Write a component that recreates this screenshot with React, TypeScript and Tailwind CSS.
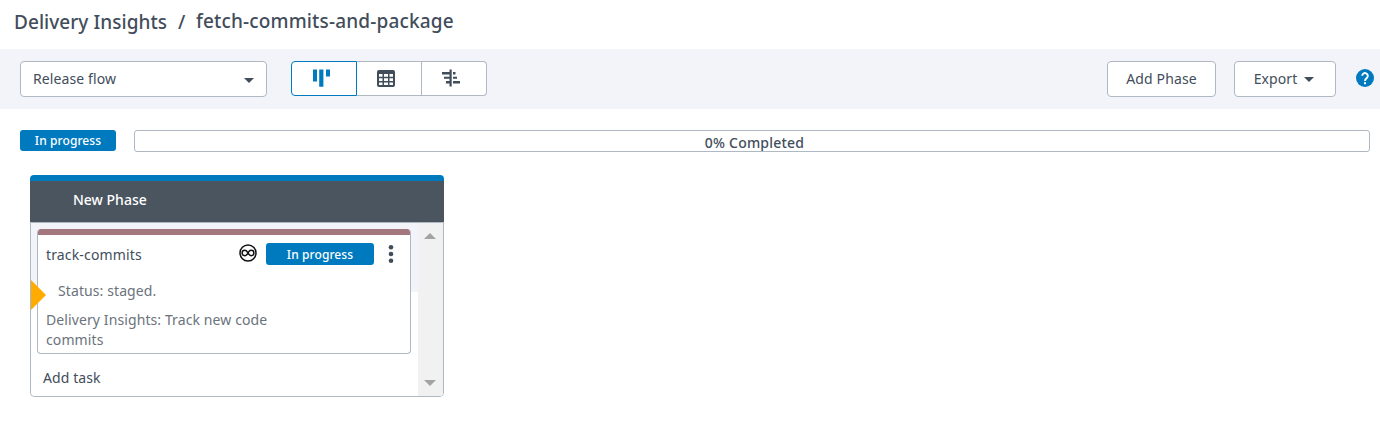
import React from "react";

type TextProps = { className?: string; children: React.ReactNode };

function Badge({ className = "", children }: TextProps) {
  return (
    <span className={`flex items-center justify-center rounded-[3px] bg-[#007abe] pt-px text-[12px] font-medium tracking-[0.1px] whitespace-nowrap text-white ${className}`}>
      {children}
    </span>
  );
}

function Caret({ className = "" }: { className?: string }) {
  return (
    <svg className={className} width="10" height="5" viewBox="0 0 10 5" fill="currentColor">
      <path d="M0 0h10L5 5z" />
    </svg>
  );
}

function BoardIcon() {
  return (
    <svg width="17" height="18" viewBox="0 0 17 18" fill="currentColor">
      <path d="M0 0.500h4v12H0zM6.200 0.500h4.200v17.300H6.200zM13 0.500h4v7h-4z" />
    </svg>
  );
}

function TableIcon() {
  return (
    <svg width="18" height="17" viewBox="0 0 18 17">
      <rect width="18" height="17" rx="2" fill="#424d5b" />
      <path
        fill="#fff"
        d="M2 4h3.500v2.700H2zM7 4h4v2.700H7zM12.500 4H16v2.700h-3.500zM2 8.200h3.500v2.700H2zM7 8.200h4v2.700H7zM12.500 8.200H16v2.700h-3.500zM2 12.400h3.500V15H2zM7 12.400h4V15H7zM12.500 12.400H16V15h-3.500z"
      />
    </svg>
  );
}

function GanttIcon() {
  return (
    <svg width="18" height="18" viewBox="0 0 18 18" fill="#424d5b">
      <path d="M7.500 0.500h2.200v17H7.500zM0 3h7.500v2.500H0zM11 3h2.500v2.500H11zM2 7.700h5.500v2H2zM11 7.700h4v2h-4zM4 12h3.500v2.500H4zM11 12h7v2.500h-7z" />
    </svg>
  );
}

function InfinityIcon() {
  return (
    <svg width="18" height="18" viewBox="0 0 18 18" fill="none" stroke="#111" strokeWidth="1.500">
      <circle cx="9" cy="9" r="8" />
      <path d="M8 10.600C7.400 11.300 6.800 11.700 5.800 11.700a2.700 2.700 0 0 1 0-5.400C7.600 6.300 8.200 7.800 9 9s1.400 2.700 3.200 2.700a2.700 2.700 0 0 0 0-5.400c-1 0-1.600.4-2.200 1.100L8 10.600" />
    </svg>
  );
}

function HelpIcon() {
  return (
    <svg className="-translate-y-px" width="18" height="18" viewBox="0 0 18 18">
      <circle cx="9" cy="9" r="9" fill="#007abe" />
      <path d="M6.200 6.700a2.800 2.800 0 1 1 4.900 2C10 9.700 9 10.100 9 11.900" fill="none" stroke="#fff" strokeWidth="1.900" />
      <rect x="8" y="13.200" width="2" height="2" fill="#fff" />
    </svg>
  );
}

function Header() {
  return (
    <header className="flex h-[49px] items-start pl-[14px] text-[19px] font-medium leading-[28px]">
      <span className="mt-2 w-[153px] whitespace-nowrap tracking-[0.05px]">Delivery Insights</span>
      <span className="mt-2 ml-[11px] w-2">/</span>
      <span className="mt-[7px] ml-[10px] tracking-[0.16px]">fetch-commits-and-package</span>
    </header>
  );
}

function Toolbar() {
  return (
    <div className="flex h-[60px] items-center bg-[#f3f4f9] pr-[5px] pl-5">
      <button className="flex h-9 w-[247px] items-center justify-between rounded border border-[#aeb9c4] bg-white pr-3 pl-3 tracking-[0.1px]">
        <span className="-mt-0.5">Release flow</span>
        <Caret className="mt-[3px]" />
      </button>
      <div className="ml-6 flex h-[35px] -translate-y-px">
        <button className="flex w-[66px] items-center justify-center rounded-l border border-[#007abe] bg-white pr-[5px] text-[#007abe]">
          <BoardIcon />
        </button>
        <button className="flex w-[65px] items-center justify-center border-y border-r border-[#aeb9c4] bg-white pr-[6px]">
          <TableIcon />
        </button>
        <button className="flex w-[65px] items-center justify-center rounded-r border-y border-r border-[#aeb9c4] bg-white pr-[6px]">
          <GanttIcon />
        </button>
      </div>
      <button className="ml-auto h-9 w-[109px] rounded border border-[#aeb9c4] bg-white pb-0.5 tracking-[0.15px]">Add Phase</button>
      <button className="mr-[20px] ml-[18px] flex h-9 w-[102px] items-center justify-center gap-[7px] rounded border border-[#aeb9c4] bg-white pr-0.5 tracking-[0.1px]">
        <span className="-mt-0.5">Export</span>
        <Caret className="mt-px" />
      </button>
      <HelpIcon />
      <span className="w-px" />
    </div>
  );
}

function TaskCard() {
  return (
    <article className="h-[125px] w-[374px] overflow-hidden rounded border border-t-0 border-[#aeb9c4] bg-white">
      <div className="-mx-px h-1.5 bg-[#a4777f]" />
      <div className="flex h-[38px] items-center pl-2">
        <span className="tracking-[0.15px]">track-commits</span>
        <span className="mb-0.5 ml-auto">
          <InfinityIcon />
        </span>
        <Badge className="ml-[9px] h-[22px] w-[108px]">In progress</Badge>
        <svg className="mr-4 ml-[14px]" width="6" height="18" viewBox="0 0 6 18" fill="#424d5b">
          <circle cx="3" cy="2.300" r="2.300" />
          <circle cx="3" cy="9" r="2.300" />
          <circle cx="3" cy="15.700" r="2.300" />
        </svg>
      </div>
      <p className="mt-2 ml-5 leading-5 tracking-[0.1px] text-[#6b737c]">Status: staged.</p>
      <p className="mt-[9px] ml-2 w-[250px] leading-5 tracking-[0.1px] text-[#6b737c]">Delivery Insights: Track new code commits</p>
    </article>
  );
}

function Phase() {
  return (
    <section className="mt-[23px] ml-[30px] h-[222px] w-[414px] overflow-hidden rounded">
      <div className="h-1.5 bg-[#007abe]" />
      <div className="flex h-[41px] items-center bg-[#4a5560] pb-1 pl-[43px] font-medium text-white">New Phase</div>
      <div className="flex h-[175px] overflow-hidden rounded-b border border-[#aeb9c4]">
        <div className="relative flex-1">
          <div className="h-[69px] bg-[#f3f4f9] pt-1.5 pl-1.5">
            <TaskCard />
          </div>
          <svg className="absolute top-[57px] left-0" width="15" height="30" viewBox="0 0 15 30">
            <path d="M0 0l15 15L0 30z" fill="#ffab00" />
          </svg>
          <div className="mt-[76px] pl-3 leading-5 tracking-[0.1px]">Add task</div>
        </div>
        <div className="flex w-[25px] flex-col items-center justify-between bg-[#f1f1f1] py-2.5 pr-px text-[#a3a3a3]">
          <svg width="12" height="6" viewBox="0 0 12 6" fill="currentColor">
            <path d="M0 6h12L6 0z" />
          </svg>
          <svg width="12" height="6" viewBox="0 0 12 6" fill="currentColor">
            <path d="M0 0h12L6 6z" />
          </svg>
        </div>
      </div>
    </section>
  );
}

export default function App() {
  return (
    <main className="h-[431px] overflow-hidden bg-white font-['Noto_Sans','Open_Sans',sans-serif] text-[14px] text-[#424d5b]">
      <Header />
      <Toolbar />
      <div className="mt-[21px] flex items-start pr-2.5 pl-5">
        <Badge className="h-[21px] w-24">In progress</Badge>
        <div className="ml-[18px] flex h-[22px] flex-1 items-center justify-center rounded-[3px] border border-[#aeb9c4] pt-[3px] pl-[5px] font-medium tracking-[0.2px]">
          0% Completed
        </div>
      </div>
      <Phase />
    </main>
  );
}
